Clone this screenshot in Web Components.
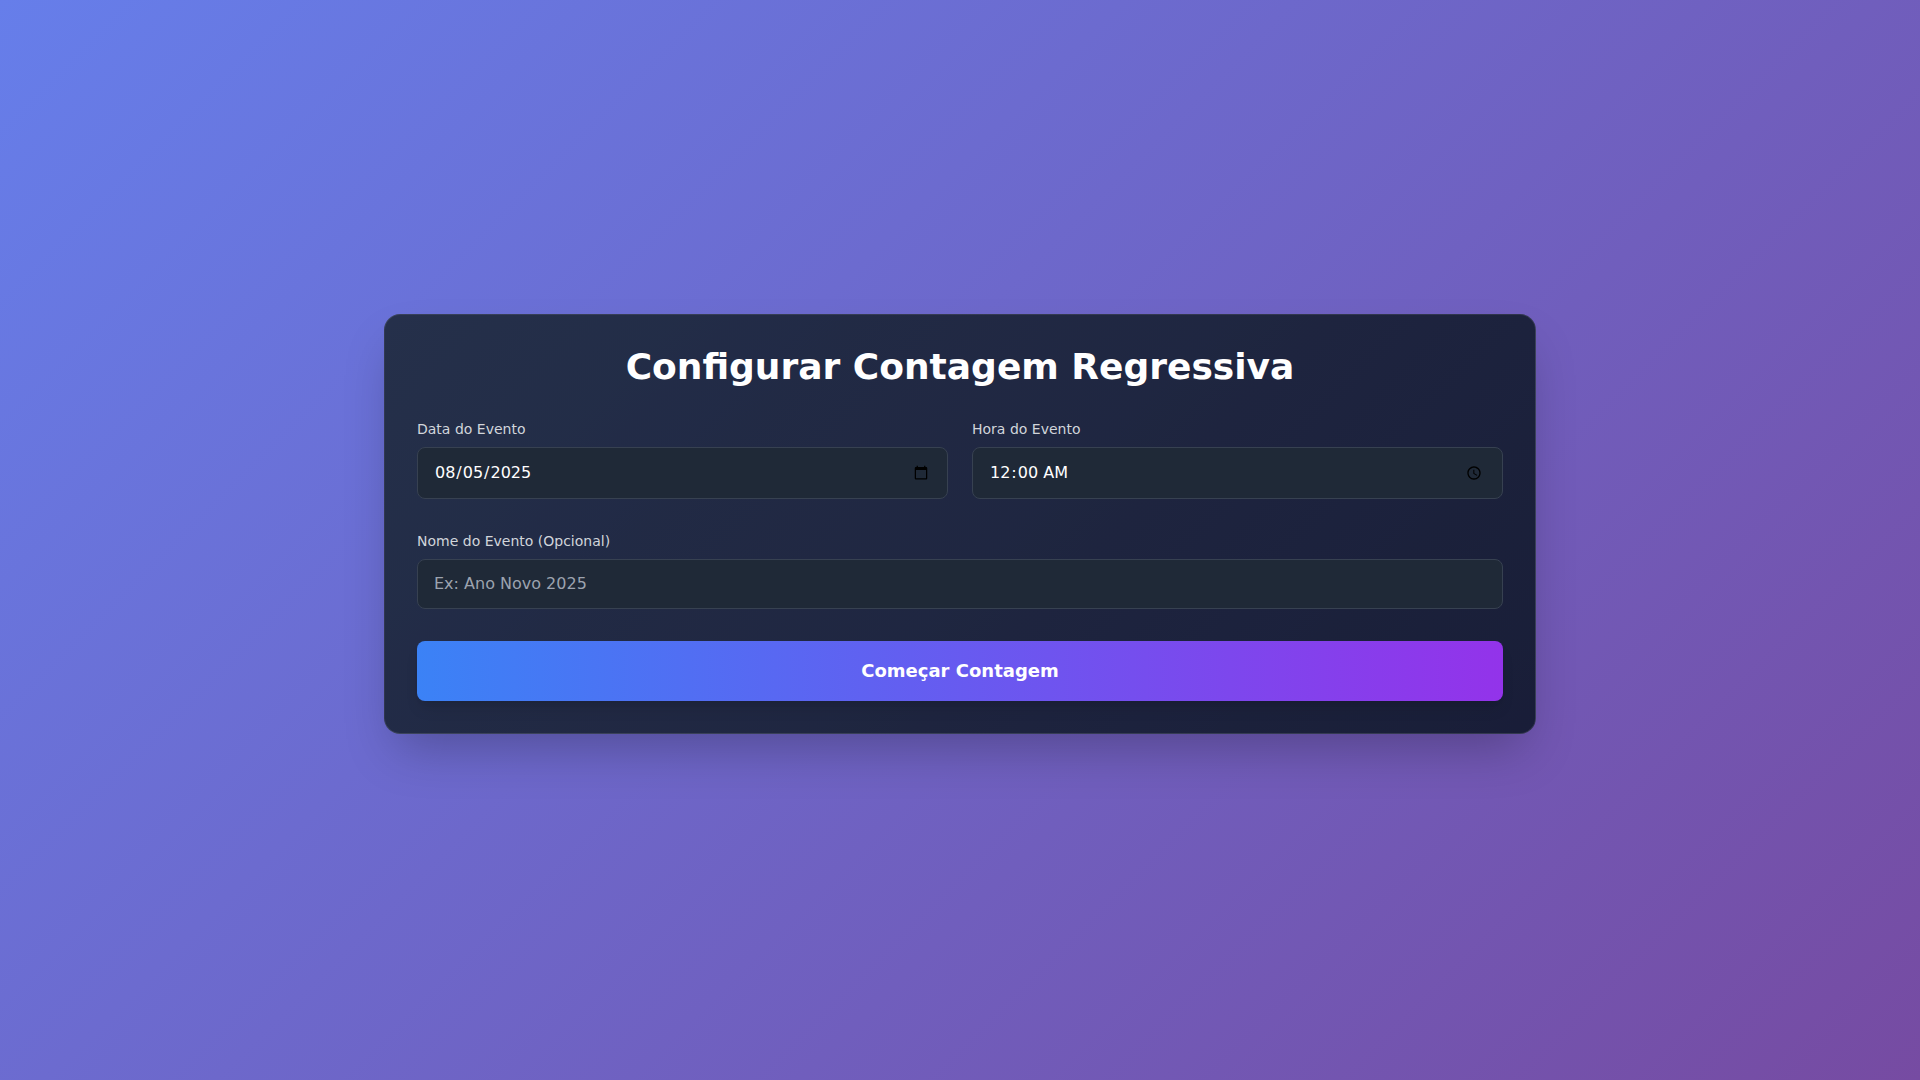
<!DOCTYPE html>
<html lang="pt-BR">
<head>
<meta charset="utf-8">
<title>Contagem Regressiva</title>
<style>
body{margin:0;font-family:"DejaVu Sans",sans-serif;line-height:24px;color:#fff}
</style>
</head>
<body>
<countdown-page>
  <setup-card heading="Configurar Contagem Regressiva">
    <event-field slot="when" label="Data do Evento" type="date" value="2025-08-05"></event-field>
    <event-field slot="when" label="Hora do Evento" type="time" value="00:00"></event-field>
    <event-field slot="name" label="Nome do Evento (Opcional)" type="text" placeholder="Ex: Ano Novo 2025"></event-field>
    <start-button slot="action">Começar Contagem</start-button>
  </setup-card>
</countdown-page>
<script>
class CountdownPage extends HTMLElement{
  constructor(){super();this.attachShadow({mode:'open'}).innerHTML=`
  <style>
  :host{display:flex;align-items:center;justify-content:center;min-height:100vh;box-sizing:border-box;padding:16px;background:linear-gradient(135deg,#667eea 0%,#764ba2 100%)}
  main{width:100%;max-width:1152px}
  </style><main><slot></slot></main>`}
}
class SetupCard extends HTMLElement{
  constructor(){super();this.attachShadow({mode:'open'}).innerHTML=`
  <style>
  :host{display:block}
  section{box-sizing:border-box;padding:32px;margin-bottom:32px;border:1px solid rgba(255,255,255,.1);border-radius:16px;background:linear-gradient(135deg,rgba(30,41,59,.9),rgba(15,23,42,.9));box-shadow:0 25px 50px -12px rgba(0,0,0,.25)}
  h1{margin:0 0 32px;font-size:36px;line-height:40px;font-weight:700;text-align:center}
  .when{display:grid;grid-template-columns:1fr 1fr;gap:24px;margin-bottom:32px}
  .name{margin-bottom:32px}
  </style>
  <section><h1></h1><div class="when"><slot name="when"></slot></div><div class="name"><slot name="name"></slot></div><slot name="action"></slot></section>`}
  connectedCallback(){this.shadowRoot.querySelector('h1').textContent=this.getAttribute('heading')}
}
class EventField extends HTMLElement{
  constructor(){super();this.attachShadow({mode:'open'}).innerHTML=`
  <style>
  :host{display:block}
  label{display:block;margin-bottom:8px;font-size:14px;line-height:20px;color:#d1d5db}
  input{display:block;box-sizing:border-box;width:100%;margin:0;padding:12px 16px;font:inherit;color:#fff;background:#1f2937;border:1px solid #374151;border-radius:8px}
  input::placeholder{color:#9ca3af}
  </style>
  <label for="field"></label><input id="field">`}
  connectedCallback(){
    this.shadowRoot.querySelector('label').textContent=this.getAttribute('label');
    const input=this.shadowRoot.querySelector('input');
    for(const name of ['type','value','placeholder'])if(this.hasAttribute(name))input.setAttribute(name,this.getAttribute(name));
  }
}
class StartButton extends HTMLElement{
  constructor(){super();this.attachShadow({mode:'open'}).innerHTML=`
  <style>
  :host{display:block}
  button{display:block;width:100%;margin:0;padding:16px 32px;border:0;border-radius:8px;font:inherit;font-size:18px;line-height:28px;font-weight:700;color:#fff;cursor:pointer;background:linear-gradient(to right,#3b82f6,#9333ea);box-shadow:0 10px 15px -3px rgba(0,0,0,.1),0 4px 6px -4px rgba(0,0,0,.1)}
  </style><button type="button"><slot></slot></button>`}
}
customElements.define('countdown-page',CountdownPage);
customElements.define('setup-card',SetupCard);
customElements.define('event-field',EventField);
customElements.define('start-button',StartButton);
</script>
</body>
</html>
